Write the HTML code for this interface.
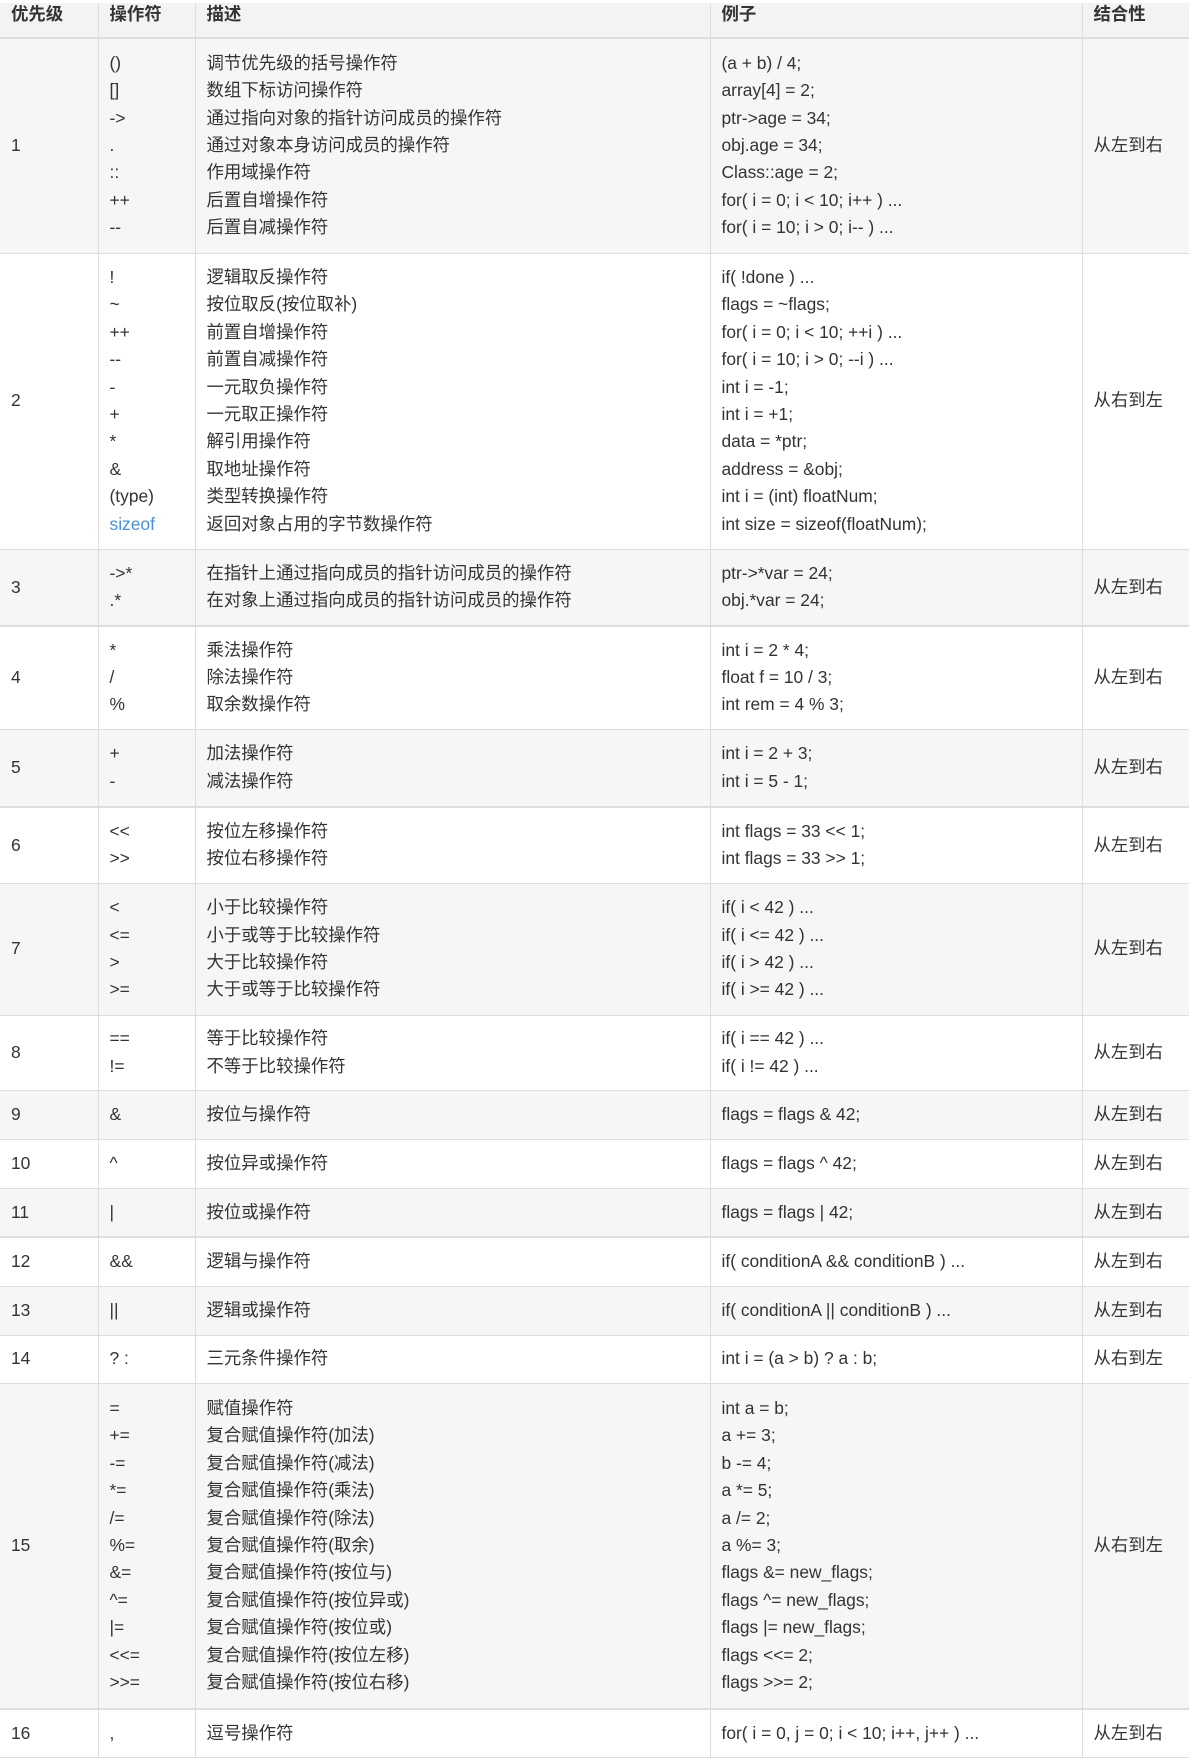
<!DOCTYPE html>
<html><head><meta charset="utf-8"><style>
html,body{margin:0;padding:0;background:#fff;}
body{width:1189px;height:1760px;overflow:hidden;font-family:"Liberation Sans","Noto Sans CJK SC",sans-serif;font-size:17.4px;color:#333;}
table{border-collapse:collapse;table-layout:fixed;width:1189px;margin-top:3px;}
td,th{border:1px solid #ddd;padding:0 11px;line-height:27.4px;vertical-align:middle;text-align:left;}
th{font-weight:bold;background:#f3f3f3;vertical-align:top;padding-top:0;height:34px;line-height:22px;border-top:none;border-bottom:2px solid #ddd;}
tr.g td{background:#f6f6f6;}
tr.t td{border-bottom:2px solid #ddd;}
td:first-child,th:first-child{border-left:none;}
td:last-child,th:last-child{border-right:none;}
a{color:#4a90d9;text-decoration:none;}
</style></head><body>
<table>
<colgroup><col style="width:98px"><col style="width:97px"><col style="width:515px"><col style="width:372px"><col style="width:107px"></colgroup>
<tr><th>优先级</th><th>操作符</th><th>描述</th><th>例子</th><th>结合性</th></tr>
<tr class="g" style="height:215px"><td>1</td><td>()<br>[]<br>-&gt;<br>.<br>::<br>++<br>--</td><td>调节优先级的括号操作符<br>数组下标访问操作符<br>通过指向对象的指针访问成员的操作符<br>通过对象本身访问成员的操作符<br>作用域操作符<br>后置自增操作符<br>后置自减操作符</td><td>(a + b) / 4;<br>array[4] = 2;<br>ptr-&gt;age = 34;<br>obj.age = 34;<br>Class::age = 2;<br>for( i = 0; i &lt; 10; i++ ) ...<br>for( i = 10; i &gt; 0; i-- ) ...</td><td>从左到右</td></tr>
<tr style="height:296px"><td>2</td><td>!<br>~<br>++<br>--<br>-<br>+<br>*<br>&amp;<br>(type)<br><a>sizeof</a></td><td>逻辑取反操作符<br>按位取反(按位取补)<br>前置自增操作符<br>前置自减操作符<br>一元取负操作符<br>一元取正操作符<br>解引用操作符<br>取地址操作符<br>类型转换操作符<br>返回对象占用的字节数操作符</td><td>if( !done ) ...<br>flags = ~flags;<br>for( i = 0; i &lt; 10; ++i ) ...<br>for( i = 10; i &gt; 0; --i ) ...<br>int i = -1;<br>int i = +1;<br>data = *ptr;<br>address = &amp;obj;<br>int i = (int) floatNum;<br>int size = sizeof(floatNum);</td><td>从右到左</td></tr>
<tr class="g t" style="height:77px"><td>3</td><td>-&gt;*<br>.*</td><td>在指针上通过指向成员的指针访问成员的操作符<br>在对象上通过指向成员的指针访问成员的操作符</td><td>ptr-&gt;*var = 24;<br>obj.*var = 24;</td><td>从左到右</td></tr>
<tr style="height:103px"><td>4</td><td>*<br>/<br>%</td><td>乘法操作符<br>除法操作符<br>取余数操作符</td><td>int i = 2 * 4;<br>float f = 10 / 3;<br>int rem = 4 % 3;</td><td>从左到右</td></tr>
<tr class="g t" style="height:78px"><td>5</td><td>+<br>-</td><td>加法操作符<br>减法操作符</td><td>int i = 2 + 3;<br>int i = 5 - 1;</td><td>从左到右</td></tr>
<tr style="height:76px"><td>6</td><td>&lt;&lt;<br>&gt;&gt;</td><td>按位左移操作符<br>按位右移操作符</td><td>int flags = 33 &lt;&lt; 1;<br>int flags = 33 &gt;&gt; 1;</td><td>从左到右</td></tr>
<tr class="g" style="height:132px"><td>7</td><td>&lt;<br>&lt;=<br>&gt;<br>&gt;=</td><td>小于比较操作符<br>小于或等于比较操作符<br>大于比较操作符<br>大于或等于比较操作符</td><td>if( i &lt; 42 ) ...<br>if( i &lt;= 42 ) ...<br>if( i &gt; 42 ) ...<br>if( i &gt;= 42 ) ...</td><td>从左到右</td></tr>
<tr style="height:75px"><td>8</td><td>==<br>!=</td><td>等于比较操作符<br>不等于比较操作符</td><td>if( i == 42 ) ...<br>if( i != 42 ) ...</td><td>从左到右</td></tr>
<tr class="g" style="height:49px"><td>9</td><td>&amp;</td><td>按位与操作符</td><td>flags = flags &amp; 42;</td><td>从左到右</td></tr>
<tr style="height:49px"><td>10</td><td>^</td><td>按位异或操作符</td><td>flags = flags ^ 42;</td><td>从左到右</td></tr>
<tr class="g t" style="height:49px"><td>11</td><td>|</td><td>按位或操作符</td><td>flags = flags | 42;</td><td>从左到右</td></tr>
<tr style="height:49px"><td>12</td><td>&amp;&amp;</td><td>逻辑与操作符</td><td>if( conditionA &amp;&amp; conditionB ) ...</td><td>从左到右</td></tr>
<tr class="g" style="height:49px"><td>13</td><td>||</td><td>逻辑或操作符</td><td>if( conditionA || conditionB ) ...</td><td>从左到右</td></tr>
<tr style="height:48px"><td>14</td><td>? :</td><td>三元条件操作符</td><td>int i = (a &gt; b) ? a : b;</td><td>从右到左</td></tr>
<tr class="g t" style="height:326px"><td>15</td><td>=<br>+=<br>-=<br>*=<br>/=<br>%=<br>&amp;=<br>^=<br>|=<br>&lt;&lt;=<br>&gt;&gt;=</td><td>赋值操作符<br>复合赋值操作符(加法)<br>复合赋值操作符(减法)<br>复合赋值操作符(乘法)<br>复合赋值操作符(除法)<br>复合赋值操作符(取余)<br>复合赋值操作符(按位与)<br>复合赋值操作符(按位异或)<br>复合赋值操作符(按位或)<br>复合赋值操作符(按位左移)<br>复合赋值操作符(按位右移)</td><td>int a = b;<br>a += 3;<br>b -= 4;<br>a *= 5;<br>a /= 2;<br>a %= 3;<br>flags &amp;= new_flags;<br>flags ^= new_flags;<br>flags |= new_flags;<br>flags &lt;&lt;= 2;<br>flags &gt;&gt;= 2;</td><td>从右到左</td></tr>
<tr style="height:48px"><td>16</td><td>,</td><td>逗号操作符</td><td>for( i = 0, j = 0; i &lt; 10; i++, j++ ) ...</td><td>从左到右</td></tr>
</table>
</body></html>
